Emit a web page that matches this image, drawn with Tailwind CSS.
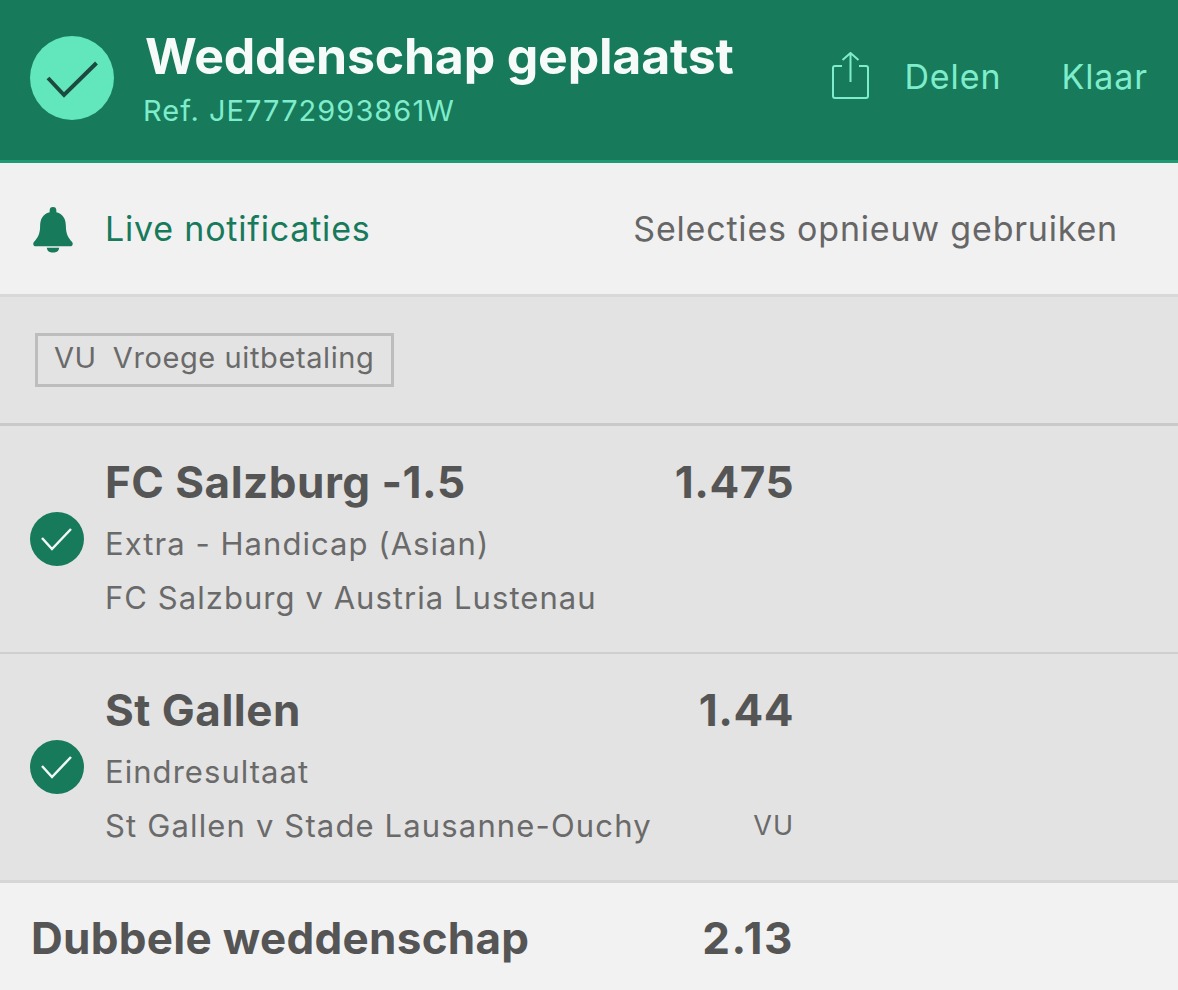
<!DOCTYPE html>
<html lang="nl">
<head>
	<meta charset="UTF-8">
	<meta name="viewport" content="width=device-width, initial-scale=1.0">
	<title>Weddenschap geplaatst</title>
	<script src="https://cdn.jsdelivr.net/npm/@tailwindcss/browser@4"></script>
</head>
<body class="bg-[#f1f1f1] font-['Inter',sans-serif] overflow-hidden">
	<div class="w-[1178px] h-[990px] overflow-hidden flex flex-col">

		<!-- header -->
		<div class="h-[163px] shrink-0 bg-[#167a5b] border-b-[3px] border-[#1f9a73] flex items-start">
			<div class="mt-[36px] ml-[30px] w-[84px] h-[84px] rounded-full bg-[#62e6bb] flex items-center justify-center shrink-0">
				<svg width="84" height="84" viewBox="0 0 84 84" fill="none">
					<path d="M18 42 L34 59 L66.500 27" stroke="#1d4a3f" stroke-width="4"/>
				</svg>
			</div>
			<div class="ml-[31px] mt-[28px]">
				<div class="text-[50px] leading-[56px] font-bold text-[#f6fbf9] tracking-[-0.2px] whitespace-nowrap">Weddenschap geplaatst</div>
				<div class="text-[29px] leading-[30px] mt-[12px] -ml-[2px] text-[#7feccb] tracking-[1.05px] whitespace-nowrap">Ref. JE7772993861W</div>
			</div>
			<div class="ml-auto mt-[52px] mr-[30px] flex items-center">
				<svg width="38" height="50" viewBox="0 0 38 50" fill="none" stroke="#7feccb" stroke-width="2" class="mr-[34px]">
					<path d="M10 14 H3 a2 2 0 0 0 -2 2 V44 a2 2 0 0 0 2 2 H34 a2 2 0 0 0 2 -2 V16 a2 2 0 0 0 -2 -2 H27"/>
					<path d="M18.500 30 V1 M10.500 8 L18.500 1 L26.500 8"/>
				</svg>
				<span class="text-[34px] leading-[50px] text-[#7feccb] tracking-[0.9px] mr-[60px]">Delen</span>
				<span class="text-[34px] leading-[50px] text-[#7feccb] tracking-[0.9px]">Klaar</span>
			</div>
		</div>

		<!-- notifications row -->
		<div class="h-[134px] shrink-0 bg-[#f1f1f1] border-b-[3px] border-[#d8d8d8] flex items-center">
			<svg width="42" height="50" viewBox="0 0 44 50" class="ml-[32px] mt-[2px] shrink-0">
				<path fill="#167a5b" d="M22 1 a3.500 3.500 0 0 1 3.500 3.500 V6.500 C33 8.500 35.500 14 35.500 21 C35.500 29 38 33 42 37.500 C43.500 39.500 42.500 42 40 42 H4 C1.500 42 0.500 39.500 2 37.500 C6 33 8.500 29 8.500 21 C8.500 14 11 8.500 18.500 6.500 V4.500 A3.500 3.500 0 0 1 22 1 Z M15.500 43.500 H28.500 C28 47.500 25.500 48.500 22 48.500 C18.500 48.500 16 47.500 15.500 43.500 Z"/>
			</svg>
			<span class="ml-[31px] text-[34px] leading-[44px] text-[#167a5b] tracking-[0.8px] whitespace-nowrap">Live notificaties</span>
			<span class="ml-auto mr-[60px] text-[34px] leading-[44px] text-[#666666] tracking-[0.8px] whitespace-nowrap">Selecties opnieuw gebruiken</span>
		</div>

		<!-- filter tag -->
		<div class="h-[129px] shrink-0 bg-[#e3e3e3] border-b-[3px] border-[#c9c9c9] flex items-center">
			<div class="ml-[35px] mt-[-1px] h-[54px] w-[359px] pl-[16px] pb-[3px] border-[3px] border-[#bdbdbd] flex items-center text-[#6a6a6a] text-[29px] tracking-[0.6px] whitespace-nowrap">
				<span>VU</span><span class="ml-[16px]">Vroege uitbetaling</span>
			</div>
		</div>

		<!-- selection 1 -->
		<div class="h-[228px] shrink-0 bg-[#e3e3e3] border-b-2 border-[#cfcfcf] flex">
			<div class="w-[105px] shrink-0 pl-[30px] pt-[86px]">
				<div class="w-[54px] h-[54px] rounded-full bg-[#167a5b] flex items-center justify-center">
					<svg width="54" height="54" viewBox="0 0 54 54" fill="none">
						<path d="M12 26 L22 37 L41 17" stroke="#f1f8f5" stroke-width="2.500"/>
					</svg>
				</div>
			</div>
			<div class="w-[689px] shrink-0 pt-[28px]">
				<div class="flex justify-between text-[44px] leading-[56px] font-bold text-[#555555] tracking-[0.5px]">
					<span>FC Salzburg -1.5</span><span>1.475</span>
				</div>
				<div class="mt-[14px] text-[31px] leading-[40px] text-[#6a6a6a] tracking-[1.05px]">Extra - Handicap (Asian)</div>
				<div class="mt-[14px] text-[31px] leading-[40px] text-[#6a6a6a] tracking-[1.05px]">FC Salzburg v Austria Lustenau</div>
			</div>
		</div>

		<!-- selection 2 -->
		<div class="h-[226px] shrink-0 bg-[#e3e3e3] flex">
			<div class="w-[105px] shrink-0 pl-[30px] pt-[86px]">
				<div class="w-[54px] h-[54px] rounded-full bg-[#167a5b] flex items-center justify-center">
					<svg width="54" height="54" viewBox="0 0 54 54" fill="none">
						<path d="M12 26 L22 37 L41 17" stroke="#f1f8f5" stroke-width="2.500"/>
					</svg>
				</div>
			</div>
			<div class="w-[689px] shrink-0 pt-[28px]">
				<div class="flex justify-between text-[44px] leading-[56px] font-bold text-[#555555] tracking-[0.5px]">
					<span>St Gallen</span><span>1.44</span>
				</div>
				<div class="mt-[14px] text-[31px] leading-[40px] text-[#6a6a6a] tracking-[1.05px]">Eindresultaat</div>
				<div class="mt-[14px] flex justify-between text-[31px] leading-[40px] text-[#6a6a6a] tracking-[1.15px]">
					<span>St Gallen v Stade Lausanne-Ouchy</span><span class="text-[27px] tracking-[1px]">VU</span>
				</div>
			</div>
		</div>

		<!-- total -->
		<div class="flex-1 bg-[#f2f2f2] border-t-[3px] border-[#d6d6d6] pl-[31px] pt-[27px]">
			<div class="w-[763px] flex justify-between text-[44px] leading-[56px] font-bold text-[#555555] tracking-[0.3px]">
				<span>Dubbele weddenschap</span><span class="tracking-[1.5px]">2.13</span>
			</div>
		</div>
	</div>
</body>
</html>
